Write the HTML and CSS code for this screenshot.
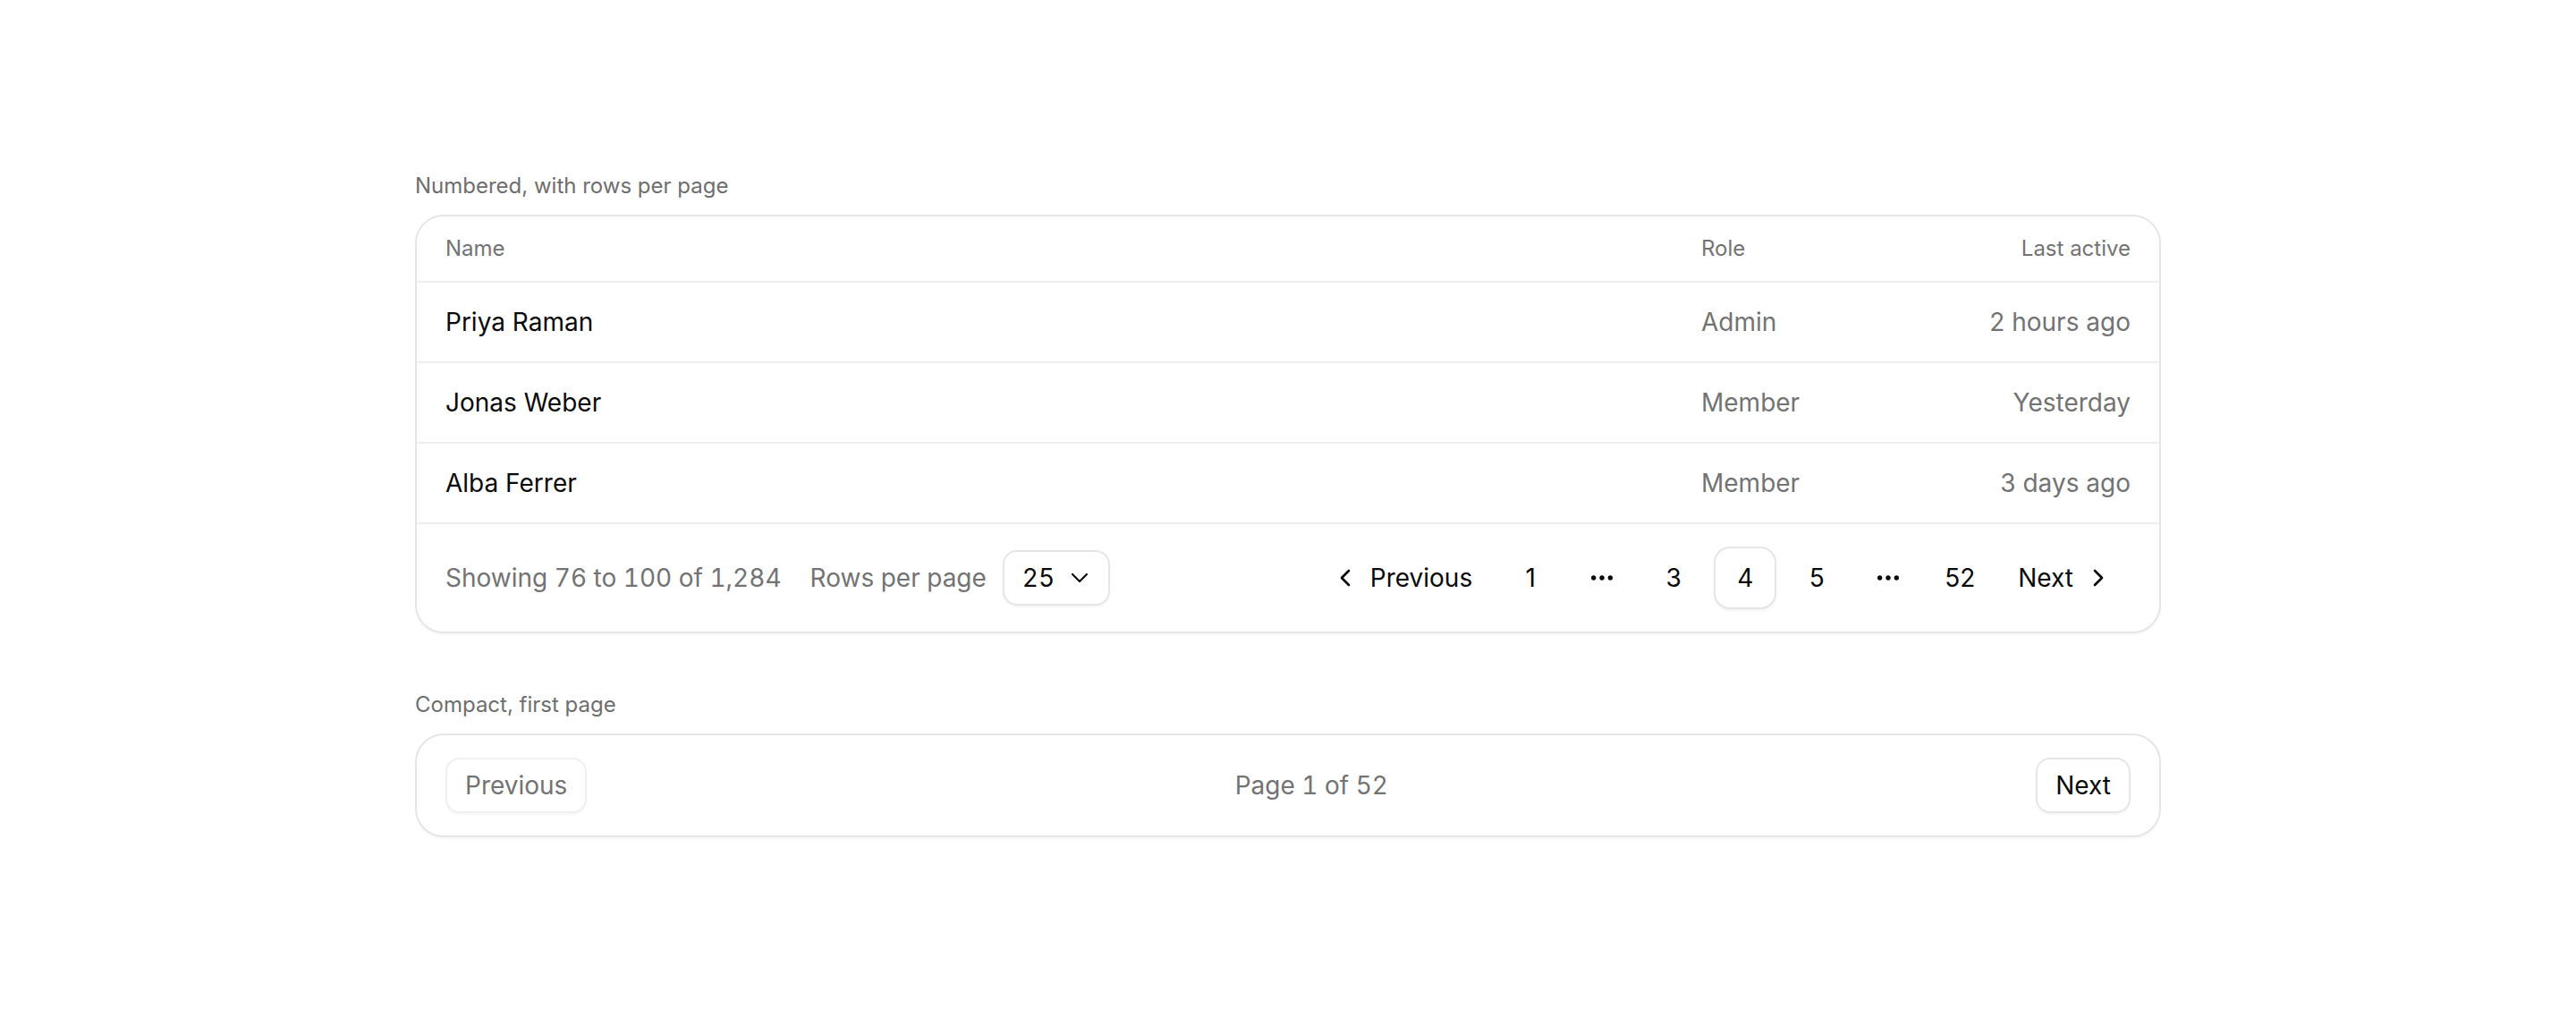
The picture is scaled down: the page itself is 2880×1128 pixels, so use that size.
FILE: index.html
```html
<!DOCTYPE html>
<html lang="en">
<head>
    <meta charset="UTF-8">
    <meta name="viewport" content="width=device-width, initial-scale=1.0">
    <title>Pagination</title>
    <link rel="stylesheet" href="styles.css">
</head>
<body>
    <main class="page">
        <section class="demo">
            <p class="demo-label">Numbered, with rows per page</p>
            <div class="card">
                <div class="row head">
                    <span>Name</span>
                    <span>Role</span>
                    <span class="right">Last active</span>
                </div>
                <div class="row">
                    <span class="name">Priya Raman</span>
                    <span>Admin</span>
                    <span class="right">2 hours ago</span>
                </div>
                <div class="row">
                    <span class="name">Jonas Weber</span>
                    <span>Member</span>
                    <span class="right">Yesterday</span>
                </div>
                <div class="row">
                    <span class="name">Alba Ferrer</span>
                    <span>Member</span>
                    <span class="right">3 days ago</span>
                </div>
                <div class="footer">
                    <div class="meta">
                        <span>Showing 76 to 100 of 1,284</span>
                        <div class="per-page">
                            <span>Rows per page</span>
                            <button class="select">
                                25
                                <svg viewBox="0 0 24 24" width="32" height="32" fill="none" stroke="currentColor" stroke-width="1.6" stroke-linecap="round" stroke-linejoin="round"><path d="m6 9 6 6 6-6"/></svg>
                            </button>
                        </div>
                    </div>
                    <nav class="pages">
                        <button class="nav-btn">
                            <svg viewBox="0 0 24 24" width="32" height="32" fill="none" stroke="currentColor" stroke-width="2" stroke-linecap="round" stroke-linejoin="round"><path d="m15 18-6-6 6-6"/></svg>
                            Previous
                        </button>
                        <button class="pg">1</button>
                        <span class="pg gap">
                            <svg viewBox="0 0 24 24" width="32" height="32" fill="none" stroke="currentColor" stroke-width="2" stroke-linecap="round"><circle cx="12" cy="12" r="1"/><circle cx="19" cy="12" r="1"/><circle cx="5" cy="12" r="1"/></svg>
                        </span>
                        <button class="pg">3</button>
                        <button class="pg current">4</button>
                        <button class="pg">5</button>
                        <span class="pg gap">
                            <svg viewBox="0 0 24 24" width="32" height="32" fill="none" stroke="currentColor" stroke-width="2" stroke-linecap="round"><circle cx="12" cy="12" r="1"/><circle cx="19" cy="12" r="1"/><circle cx="5" cy="12" r="1"/></svg>
                        </span>
                        <button class="pg">52</button>
                        <button class="nav-btn">
                            Next
                            <svg viewBox="0 0 24 24" width="32" height="32" fill="none" stroke="currentColor" stroke-width="2" stroke-linecap="round" stroke-linejoin="round"><path d="m9 18 6-6-6-6"/></svg>
                        </button>
                    </nav>
                </div>
            </div>
        </section>

        <section class="demo">
            <p class="demo-label">Compact, first page</p>
            <div class="card compact">
                <button class="btn" disabled>Previous</button>
                <span class="muted">Page 1 of 52</span>
                <button class="btn">Next</button>
            </div>
        </section>
    </main>
</body>
</html>
```

FILE: styles.css
```css
body {
    margin: 0;
    min-height: 100vh;
    display: flex;
    align-items: center;
    justify-content: center;
    font-family: Inter, 'Noto Sans', sans-serif;
    color: #0a0a0a;
    background: #fff;
}
.page {
    width: 1952px;
    display: flex;
    flex-direction: column;
    gap: 64px;
}
.demo-label {
    margin: 0 0 16px;
    font-size: 24px;
    line-height: 32px;
    color: #6e6e6e;
}
.card {
    border: 2px solid #e6e6e6;
    border-radius: 32px;
    background: #fff;
    box-shadow: 0 2px 3px rgba(0, 0, 0, 0.04);
    overflow: hidden;
}
.row {
    display: grid;
    grid-template-columns: 1fr 240px 240px;
    align-items: center;
    padding: 24px 32px;
    font-size: 28px;
    line-height: 40px;
    color: #737373;
    border-top: 2px solid #efefef;
}
.row.head {
    border-top: none;
    padding: 22px 32px;
    font-size: 24px;
    line-height: 28px;
}
.row .name {
    color: #0a0a0a;
}
.right {
    text-align: right;
}
.footer {
    display: flex;
    align-items: center;
    justify-content: space-between;
    padding: 25px 32px;
    border-top: 2px solid #efefef;
    font-size: 28px;
    color: #737373;
}
.meta {
    display: flex;
    align-items: center;
    gap: 32px;
    font-variant-numeric: tabular-nums;
}
.per-page {
    display: flex;
    align-items: center;
    gap: 18px;
}
button {
    font-family: inherit;
    font-size: 28px;
    color: #0a0a0a;
    background: #fff;
    border: none;
    padding: 0;
    cursor: pointer;
}
.select {
    display: flex;
    align-items: center;
    gap: 12px;
    height: 62px;
    padding: 0 16px 0 20px;
    border: 2px solid #e6e6e6;
    border-radius: 16px;
    box-shadow: 0 2px 3px rgba(0, 0, 0, 0.04);
    font-variant-numeric: tabular-nums;
}
.pages {
    display: flex;
    align-items: center;
    gap: 10px;
}
.nav-btn {
    display: flex;
    align-items: center;
    gap: 12px;
    height: 70px;
    padding: 0 20px;
}
.pg {
    display: flex;
    align-items: center;
    justify-content: center;
    width: 70px;
    height: 70px;
    box-sizing: border-box;
    border-radius: 18px;
    color: #0a0a0a;
}
.pg.current {
    border: 2px solid #e6e6e6;
    box-shadow: 0 2px 3px rgba(0, 0, 0, 0.05);
}
.compact {
    display: flex;
    align-items: center;
    justify-content: space-between;
    padding: 25px 32px;
}
.btn {
    height: 62px;
    padding: 0 20px;
    border: 2px solid #e6e6e6;
    border-radius: 16px;
    box-shadow: 0 2px 3px rgba(0, 0, 0, 0.04);
}
.btn:disabled {
    color: #737373;
    border-color: #f0f0f0;
    cursor: default;
}
.muted {
    font-size: 28px;
    color: #737373;
    font-variant-numeric: tabular-nums;
}
```
